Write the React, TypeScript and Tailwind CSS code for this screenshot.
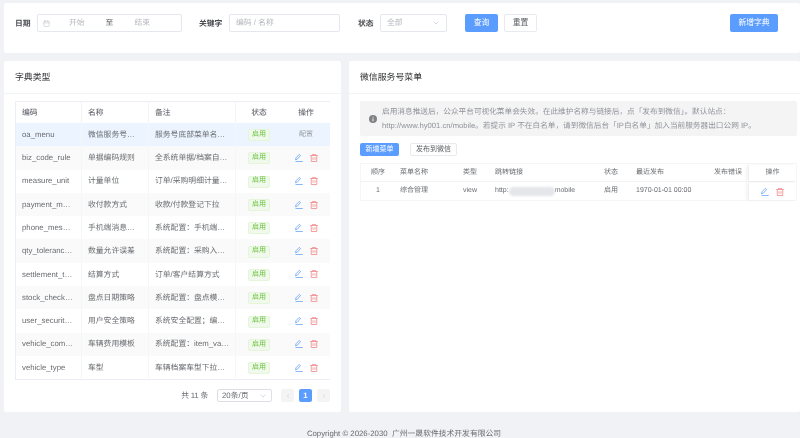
import React from "react";
import { Calendar, ChevronDown, ChevronLeft, ChevronRight } from "lucide-react";

const dictRows = [
  { code: "oa_menu", name: "微信服务号…", remark: "服务号底部菜单名…" },
  { code: "biz_code_rule", name: "单据编码规则", remark: "全系统单据/档案自…" },
  { code: "measure_unit", name: "计量单位", remark: "订单/采购明细计量…" },
  { code: "payment_m…", name: "收付款方式", remark: "收款/付款登记下拉" },
  { code: "phone_mes…", name: "手机端消息…", remark: "系统配置：手机端…" },
  { code: "qty_toleranc…", name: "数量允许误差", remark: "系统配置：采购入…" },
  { code: "settlement_t…", name: "结算方式", remark: "订单/客户结算方式" },
  { code: "stock_check…", name: "盘点日期策略", remark: "系统配置：盘点模…" },
  { code: "user_securit…", name: "用户安全策略", remark: "系统安全配置；编…" },
  { code: "vehicle_com…", name: "车辆费用模板", remark: "系统配置：item_va…" },
  { code: "vehicle_type", name: "车型", remark: "车辆档案车型下拉…" },
];

const EditIcon = () => (
  <svg viewBox="0 0 16 16" className="w-[8px] h-[8px] text-[#5f9df7]" fill="none" stroke="currentColor" strokeWidth="1.5">
    <path d="M1 11.5 L2 7.5 L8.5 0.8 L11 3 L4.5 10.5 Z" />
    <path d="M1 15 H15.5" />
  </svg>
);

const TrashIcon = () => (
  <svg viewBox="0 0 16 16" className="w-[8px] h-[8px] text-[#f08080]" fill="none" stroke="currentColor" strokeWidth="1.5">
    <path d="M0.5 3 H15.5 M5 3 V0.8 H11 V3 M2.5 3 V15 H13.5 V3 M6 6.5 V11.5 M10 6.5 V11.5" />
  </svg>
);

const App: React.FC = () => {
  return (
    <div className="w-[800px] h-[438px] overflow-hidden bg-[#f0f2f5] text-[7.8px] text-[#696c70] font-['Liberation_Sans','Noto_Sans_CJK_SC',sans-serif] [text-rendering:geometricPrecision] blur-[0.3px] flex flex-col pt-[3px] pl-[4px]">
      {/* Search bar */}
      <div className="h-[50px] bg-white rounded-[2px] flex items-start pt-[11px] pl-[11px] shrink-0">
        <span className="font-bold text-[#4a4c50] w-[22px] leading-[20px]">日期</span>
        <div className="w-[145px] h-[18px] border border-[#e4e7ed] rounded-[2px] flex items-center text-[#b4b7bd]">
          <Calendar className="w-[7px] h-[7px] ml-[5px] text-[#c0c4cc]" />
          <span className="ml-[19px]">开始</span>
          <span className="ml-[21px] text-[#606266]">至</span>
          <span className="ml-[21px]">结束</span>
        </div>
        <span className="font-bold text-[#4a4c50] ml-[17px] w-[30px] leading-[20px]">关键字</span>
        <div className="w-[111px] h-[18px] border border-[#e4e7ed] rounded-[2px] flex items-center pl-[6px] text-[#b4b7bd]">编码 / 名称</div>
        <span className="font-bold text-[#4a4c50] ml-[18px] w-[22px] leading-[20px]">状态</span>
        <div className="w-[67px] h-[18px] border border-[#e4e7ed] rounded-[2px] flex items-center justify-between px-[6px] text-[#b4b7bd]">
          全部
          <ChevronDown className="w-[8px] h-[8px] text-[#c0c4cc]" />
        </div>
        <button className="ml-[18px] w-[33px] h-[18px] bg-[#5b9dff] text-white rounded-[2px]">查询</button>
        <button className="ml-[6px] w-[33px] h-[18px] border border-[#e8eaef] rounded-[2px] text-[#606266]">重置</button>
        <button className="ml-[193px] w-[48px] h-[18px] bg-[#5b9dff] text-white rounded-[2px]">新增字典</button>
      </div>

      <div className="flex gap-[8px] mt-[8px] shrink-0">
        {/* Dictionary types */}
        <div className="w-[337px] h-[351px] bg-white rounded-[2px] shrink-0">
          <div className="h-[33px] border-b border-[#f2f3f5] flex items-center pl-[11px] pt-[1px] text-[8.9px] text-[#303133]">字典类型</div>
          <div className="mx-[11px] mt-[7px] border border-[#ebeef5] border-r-0">
            <div className="grid grid-cols-[66px_67px_87px_46px_48px] h-[21px] items-center font-medium text-[#6b6e75]">
              <span className="pl-[6px] h-full flex items-center border-r border-[#f2f3f5]">编码</span>
              <span className="pl-[6px] h-full flex items-center border-r border-[#f2f3f5]">名称</span>
              <span className="pl-[6px] h-full flex items-center border-r border-[#f2f3f5]">备注</span>
              <span className="text-center">状态</span>
              <span className="text-center">操作</span>
            </div>
            {dictRows.map((row, i) => (
              <div
                key={row.code}
                className={`grid grid-cols-[66px_67px_87px_46px_48px] h-[23.3px] items-center ${i === 0 ? "bg-[#ecf5ff]" : i % 2 === 1 ? "bg-[#fafafa]" : "bg-white"}`}
              >
                <span className="pl-[6px] h-full flex items-center border-r border-[#f5f6f8] whitespace-nowrap overflow-hidden">{row.code}</span>
                <span className="pl-[6px] h-full flex items-center border-r border-[#f5f6f8] whitespace-nowrap overflow-hidden">{row.name}</span>
                <span className="pl-[6px] h-full flex items-center border-r border-[#f5f6f8] whitespace-nowrap overflow-hidden">{row.remark}</span>
                <span className="flex justify-center pt-[1px]">
                  <span className="w-[22px] h-[12px] bg-[#f0f9eb] border border-[#e4f5da] rounded-[2px] text-[#67c23a] text-[7px] flex items-center justify-center">启用</span>
                </span>
                {i === 0 ? (
                  <span className="text-center text-[7px] text-[#909399] pt-[1px]">配置</span>
                ) : (
                  <span className="flex justify-center gap-[7px]">
                    <EditIcon />
                    <TrashIcon />
                  </span>
                )}
              </div>
            ))}
          </div>
          <div className="flex items-center justify-end mt-[9px] mr-[11px]">
            <span className="tracking-[-0.2px]">共 11 条</span>
            <div className="ml-[9px] w-[55px] h-[13px] border border-[#dcdfe6] rounded-[2px] flex items-center justify-between px-[4px]">
              20条/页
              <ChevronDown className="w-[8px] h-[8px] text-[#c0c4cc]" />
            </div>
            <div className="ml-[9px] w-[13px] h-[13px] bg-[#f4f4f5] rounded-[2px] flex items-center justify-center">
              <ChevronLeft className="w-[6px] h-[6px] text-[#c0c4cc]" />
            </div>
            <div className="ml-[5px] w-[13px] h-[13px] bg-[#5b9dff] text-white font-bold rounded-[2px] flex items-center justify-center">1</div>
            <div className="ml-[5px] w-[13px] h-[13px] bg-[#f4f4f5] rounded-[2px] flex items-center justify-center">
              <ChevronRight className="w-[6px] h-[6px] text-[#c0c4cc]" />
            </div>
          </div>
        </div>

        {/* WeChat menu */}
        <div className="w-[451px] h-[351px] bg-white rounded-[2px] shrink-0">
          <div className="h-[33px] border-b border-[#f2f3f5] flex items-center pl-[11px] pt-[1px] text-[8.9px] text-[#303133]">微信服务号菜单</div>
          <div className="mx-[11px] mt-[7px] w-[437px] h-[35px] bg-[#f4f4f5] rounded-[2px] flex items-center text-[#909399] leading-[14px] text-[7.67px]">
            <svg viewBox="0 0 16 16" className="w-[8px] h-[8px] ml-[9px] mr-[5px] shrink-0">
              <circle cx="8" cy="8" r="8" fill="#808285" />
              <path d="M8 7 V12.5 M8 3.5 V5.2" stroke="#f4f4f5" strokeWidth="2" />
            </svg>
            <p className="whitespace-nowrap">
              启用消息推送后，公众平台可视化菜单会失效。在此维护名称与链接后，点「发布到微信」。默认站点：
              <br />
              http://www.hy001.cn/mobile。若提示 IP 不在白名单，请到微信后台「IP白名单」加入当前服务器出口公网 IP。
            </p>
          </div>
          <div className="mx-[11px] mt-[7px] flex gap-[11px]">
            <button className="w-[39px] h-[13px] bg-[#5b9dff] text-white rounded-[2px] text-[7px]">新增菜单</button>
            <button className="w-[47px] h-[13px] border border-[#e8eaef] rounded-[2px] text-[#606266] text-[7px]">发布到微信</button>
          </div>
          <div className="mx-[11px] mt-[7px] w-[437px] border border-[#f5f6f8] text-[7px]">
            <div className="grid grid-cols-[34px_55px_40px_101px_40px_78px_39px_48px] h-[18px] items-center border-b border-[#f2f3f5] pt-[1px]">
              <span className="text-center">顺序</span>
              <span className="pl-[5px]">菜单名称</span>
              <span className="text-center">类型</span>
              <span className="pl-[5px]">跳转链接</span>
              <span className="text-center">状态</span>
              <span className="pl-[5px]">最近发布</span>
              <span className="pl-[5px]">发布错误</span>
              <span className="text-center h-full flex items-center justify-center border-l border-[#f0f0f0] shadow-[-2px_0_3px_rgba(0,0,0,0.05)]">操作</span>
            </div>
            <div className="grid grid-cols-[34px_55px_40px_101px_40px_78px_39px_48px] h-[18px] items-center pt-[1px]">
              <span className="text-center">1</span>
              <span className="pl-[5px]">综合管理</span>
              <span className="text-center">view</span>
              <span className="pl-[5px] flex items-center whitespace-nowrap">
                http:<span className="w-[46px] h-[9px] bg-[#e4e6ea] rounded-full blur-[1px]" />mobile
              </span>
              <span className="text-center">启用</span>
              <span className="pl-[5px]">1970-01-01 00:00</span>
              <span />
              <span className="h-full flex items-center justify-center gap-[7px] border-l border-[#f0f0f0] shadow-[-2px_0_3px_rgba(0,0,0,0.05)]">
                <EditIcon />
                <TrashIcon />
              </span>
            </div>
          </div>
        </div>
      </div>

      <div className="text-center mt-[16px] w-[800px]">Copyright © 2026-2030&nbsp; 广州一晟软件技术开发有限公司</div>
    </div>
  );
};

export default App;
